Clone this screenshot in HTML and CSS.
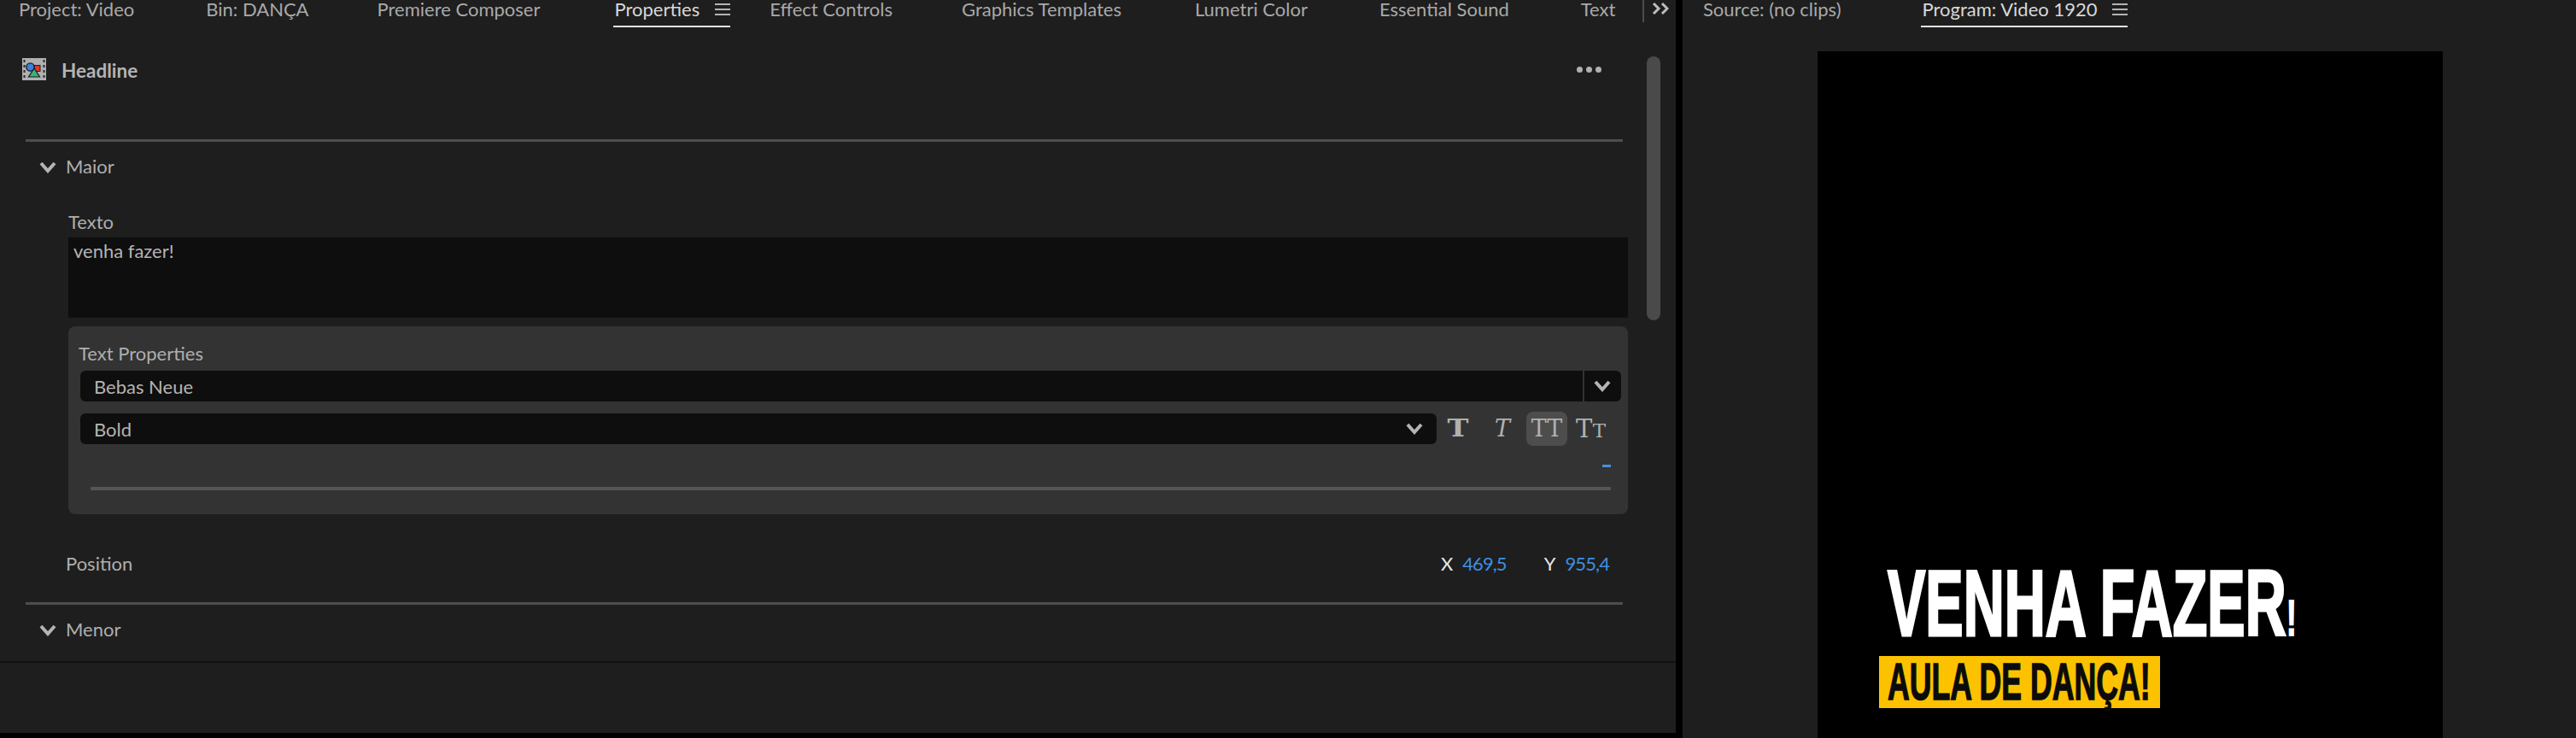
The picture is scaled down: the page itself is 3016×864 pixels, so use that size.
FILE: index.html
```html
<!DOCTYPE html>
<html lang="pt">
<head>
<meta charset="utf-8">
<title>Premiere Pro</title>
<link rel="stylesheet" href="styles.css">
</head>
<body>
<div class="app">
  <section class="panel left">
    <nav class="tabbar">
      <span class="tab">Project: Video</span>
      <span class="tab tab-bin">Bin: DANÇA</span>
      <span class="tab tab-composer">Premiere Composer</span>
      <span class="tab active"><span>Properties</span>
        <svg class="burger" viewBox="0 0 18 14"><path d="M0 1h18M0 7h18M0 13h18"/></svg></span>
      <span class="tab after-active">Effect Controls</span>
      <span class="tab tab-graphics">Graphics Templates</span>
      <span class="tab">Lumetri Color</span>
      <span class="tab">Essential Sound</span>
      <span class="tab">Text</span>
      <span class="more">
        <svg viewBox="0 0 20 16"><path d="M2 2l6 6-6 6M12 2l6 6-6 6"/></svg>
      </span>
    </nav>
    <div class="props">
      <div class="scrollbar"></div>
      <header class="head">
        <svg class="clip-icon" viewBox="0 0 28 26">
          <rect width="28" height="26" fill="#b0b0b0"/>
          <g fill="#2a2a2a"><rect x="1.5" y="2" width="2" height="3"/><rect x="1.5" y="8" width="2" height="3"/><rect x="1.5" y="14" width="2" height="3"/><rect x="1.5" y="20" width="2" height="3"/><rect x="24.5" y="2" width="2" height="3"/><rect x="24.5" y="8" width="2" height="3"/><rect x="24.5" y="14" width="2" height="3"/><rect x="24.5" y="20" width="2" height="3"/></g>
          <rect x="14" y="8.5" width="7" height="7" fill="#e0352f" stroke="#222"/>
          <circle cx="9.5" cy="10.5" r="4.6" fill="#3b82e0" stroke="#1a1a1a" stroke-width="1.4"/>
          <path d="M14 12l6.5 10h-13z" fill="#35b57c" stroke="#1a1a1a" stroke-width="1.2"/>
        </svg>
        <strong class="head-title">Headline</strong>
        <span class="dots"><i></i><i></i><i></i></span>
      </header>
      <hr class="rule first">
      <div class="group-row maior">
        <svg class="chev" viewBox="0 0 20 14"><path d="M2 2l8 9 8-9"/></svg>
        <span class="group-name">Maior</span>
      </div>
      <div class="field-label">Texto</div>
      <div class="textarea">venha fazer!</div>
      <div class="text-props">
        <div class="tp-label">Text Properties</div>
        <div class="select font-select">
          <span class="select-value">Bebas Neue</span>
          <span class="select-btn"><svg class="chev" viewBox="0 0 20 14"><path d="M2 2l8 9 8-9"/></svg></span>
        </div>
        <div class="style-row">
          <div class="select weight-select">
            <span class="select-value">Bold</span>
            <svg class="chev" viewBox="0 0 20 14"><path d="M2 2l8 9 8-9"/></svg>
          </div>
          <span class="glyph g-bold">T</span>
          <span class="glyph g-ital">T</span>
          <span class="glyph g-caps">TT</span>
          <span class="glyph g-small">T<small>T</small></span>
        </div>
        <div class="dash-row"><i class="dash"></i></div>
        <div class="track"></div>
      </div>
      <div class="position">
        <span class="pos-label">Position</span>
        <span class="axis ax-x">X</span><span class="val">469,5</span>
        <span class="axis ax-y">Y</span><span class="val">955,4</span>
      </div>
      <hr class="rule second">
      <div class="group-row menor">
        <svg class="chev" viewBox="0 0 20 14"><path d="M2 2l8 9 8-9"/></svg>
        <span class="group-name">Menor</span>
      </div>
    </div>
    <div class="foot"></div>
  </section>
  <section class="panel right">
    <nav class="tabbar">
      <span class="tab">Source: (no clips)</span>
      <span class="tab active"><span>Program: Video 1920</span>
        <svg class="burger" viewBox="0 0 18 14"><path d="M0 1h18M0 7h18M0 13h18"/></svg></span>
    </nav>
    <div class="monitor">
      <div class="video">
        <div class="caption">
          <div class="cap-main"><span class="cap-main-text">VENHA FAZER<span class="bang">!</span></span></div>
          <div class="cap-sub"><span class="cap-sub-text">AULA DE DANÇA!</span></div>
        </div>
      </div>
    </div>
  </section>
</div>
</body>
</html>
```

FILE: styles.css
```css
* { box-sizing: border-box; }
html, body { margin: 0; height: 100%; background: #000; overflow: hidden; }
body { font-family: "Lato", "Liberation Sans", sans-serif; font-size: 22px; color: #aeaeae; }
.app { display: flex; gap: 8px; width: 3016px; height: 864px; align-items: flex-start; }
.panel { background: #1e1e1e; display: flex; flex-direction: column; }
.left { width: 1962px; height: 858px; }
.right { flex: 1; height: 864px; }

.tabbar { display: flex; height: 32px; gap: 84px; padding-left: 22px; flex: none; }
.right .tabbar { padding-left: 24px; gap: 95px; }
.tab { line-height: 22px; height: 32px; color: #a9a9a9; white-space: nowrap; display: flex; gap: 18px; align-items: flex-start; }
.tab.active { color: #d8d8d8; border-bottom: 2px solid #e2e2e2; margin-left: -2px; padding-left: 2px; }
.tab-bin { margin-right: -4px; }
.tab-composer { margin-right: 3px; }
.tab.after-active { margin-left: -38px; margin-right: -3px; }
.tab-graphics { margin-right: 2px; }
.burger { width: 18px; height: 14px; margin-top: 4px; fill: none; stroke: #b4b4b4; stroke-width: 2; }
.more { margin-left: -52px; width: 32px; height: 26px; border-left: 2px solid #4c4c4c; padding: 2px 0 0 9px; display: block; }
.more svg { display: block; width: 20px; height: 16px; fill: none; stroke: #bdbdbd; stroke-width: 3; }

.props { height: 742px; flex: none; position: relative; display: flex; flex-direction: column; }
.scrollbar { position: absolute; left: 1928px; top: 34px; width: 16px; height: 309px; border-radius: 8px; background: #4a4a4a; }
.head { display: flex; align-items: center; height: 26px; margin: 36px 0 0 26px; width: 1849px; flex: none; }
.clip-icon { width: 28px; height: 26px; flex: none; }
.head-title { margin: 3px 0 0 18px; font-weight: 700; font-size: 22.5px; color: #b4b4b4; }
.dots { margin-left: auto; display: flex; gap: 4px; }
.dots i { width: 7px; height: 7px; border-radius: 50%; background: #b0b0b0; }
.rule { flex: none; border: 0; margin: 0 0 0 30px; width: 1870px; height: 3px; background: #4e4e4e; }
.rule.first { margin-top: 69px; }
.group-row { display: flex; align-items: center; height: 24px; padding-left: 46px; gap: 11px; flex: none; }
.group-name { margin-bottom: 4px; }
.maior { margin-top: 18px; }
.menor { margin-top: 18px; }
.chev { width: 20px; height: 14px; fill: none; stroke: #b4b4b4; stroke-width: 4; flex: none; }
.field-label { height: 24px; margin: 40px 0 0 80px; line-height: 24px; flex: none; }
.textarea { flex: none; margin: 6px 0 0 80px; width: 1826px; height: 94px; background: #0e0e0e; padding: 4px 6px; line-height: 24px; color: #b4b4b4; }
.text-props { flex: none; margin: 10px 0 0 80px; width: 1826px; height: 220px; background: #333; border-radius: 8px; padding: 20px 8px 0 14px; display: flex; flex-direction: column; }
.tp-label { height: 24px; line-height: 24px; margin-left: -2px; }
.select { display: flex; align-items: center; height: 36px; background: #0e0e0e; border-radius: 6px; }
.select-value { padding-left: 16px; color: #b4b4b4; }
.font-select { margin-top: 8px; justify-content: space-between; flex: none; }
.select-btn { width: 45px; height: 36px; border-left: 2px solid #333; display: flex; align-items: center; padding-left: 11px; }
.style-row { display: flex; align-items: center; height: 40px; margin-top: 12px; flex: none; }
.weight-select { width: 1588px; justify-content: space-between; padding-right: 16px; }
.glyph { font-family: "DejaVu Serif", "Liberation Serif", serif; color: #b0b0b0; font-size: 27px; line-height: 40px; height: 40px; text-align: center; display: block; }
.g-bold { font-weight: 700; width: 26px; margin-left: 12px; font-size: 28px; transform: scaleX(1.2); }
.g-ital { font-style: italic; width: 24px; margin-left: 27px; }
.g-caps { width: 48px; margin-left: 16px; background: #4d4d4d; border-radius: 8px; }
.g-small { width: 40px; margin-left: 10px; white-space: nowrap; text-align: left; font-size: 29px; letter-spacing: .5px; }
.g-small small { font-size: 23px; }
.dash-row { display: flex; justify-content: flex-end; height: 3px; margin: 22px 12px 0 0; flex: none; }
.dash { width: 10px; height: 3px; background: #4a8fd8; }
.track { height: 4px; margin: 23px 12px 0 12px; background: #555; border-radius: 1px; flex: none; }
.position { flex: none; display: flex; align-items: center; height: 24px; margin-top: 47px; padding-left: 77px; width: 1884px; }
.position > span { margin-bottom: 3px; }
.pos-label { margin-right: auto; }
.axis { color: #e8e8e8; }
.ax-y { margin-left: 44px; }
.val { color: #3f8ee0; margin-left: 11px; letter-spacing: -.9px; }
.rule.second { margin-top: 32px; }
.foot { flex: 1; border-top: 2px solid #111; }

.monitor { flex: 1; padding: 28px 156px 0 158px; min-height: 0; }
.video { height: 804px; background: #000; position: relative; overflow: hidden; }
.caption { position: absolute; left: 72px; top: 596px; width: 500px; }
.cap-main, .cap-sub { font-family: "Liberation Sans", sans-serif; font-weight: 700; white-space: nowrap; }
.cap-main-text, .cap-sub-text { display: inline-block; transform-origin: 0 50%; }
.cap-main { width: 480px; height: 100px; font-size: 109px; line-height: 100px; color: #fff; margin-left: 10px; }
.cap-main-text { transform: scaleX(.61); -webkit-text-stroke: 3px #fff; }
.bang { font-size: 60px; -webkit-text-stroke: 1.5px #fff; }
.cap-sub { margin-top: 12px; width: 329px; height: 61px; background: #fcc200; color: #0b0b0b; padding-left: 10px; font-size: 62px; line-height: 60px; }
.cap-sub-text { transform: scaleX(.575); -webkit-text-stroke: 1.5px #0b0b0b; }
```
